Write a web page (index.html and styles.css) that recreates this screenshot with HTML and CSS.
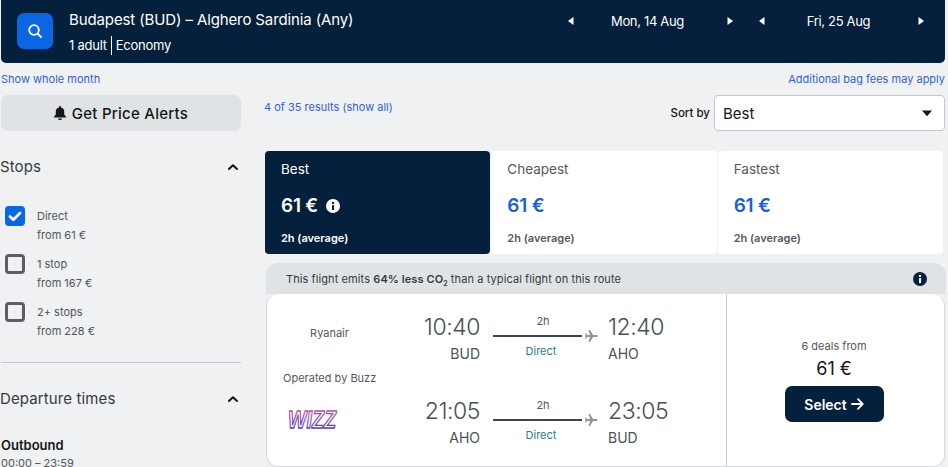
FILE: index.html
```html
<!DOCTYPE html>
<html lang="en">
<head>
<meta charset="utf-8">
<title>Flights</title>
<link rel="stylesheet" href="styles.css">
</head>
<body>
<div class="page">
  <header class="topbar">
    <div class="search-btn">
      <svg width="16" height="16" viewBox="0 0 16 16"><circle cx="7" cy="7" r="4.800" fill="none" stroke="#fff" stroke-width="1.800"/><path d="M10.600 10.600 14 14" stroke="#fff" stroke-width="2" stroke-linecap="round"/></svg>
    </div>
    <div class="route">
      <div class="route-title">Budapest (BUD) – Alghero Sardinia (Any)</div>
      <div class="route-sub"><span class="sub-a">1 adult</span><span>Economy</span></div>
    </div>
    <div class="dates">
      <div class="date-picker">
        <svg class="tri" viewBox="0 0 6 8"><path d="M5.500 0v8L0 4z"/></svg>
        <span class="date-text">Mon, 14 Aug</span>
        <svg class="tri" viewBox="0 0 6 8"><path d="M.5 0v8L6 4z"/></svg>
      </div>
      <div class="date-picker">
        <svg class="tri" viewBox="0 0 6 8"><path d="M5.500 0v8L0 4z"/></svg>
        <span class="date-text">Fri, 25 Aug</span>
        <svg class="tri" viewBox="0 0 6 8"><path d="M.5 0v8L6 4z"/></svg>
      </div>
    </div>
  </header>

  <div class="notes">
    <a class="link">Show whole month</a>
    <a class="link">Additional bag fees may apply</a>
  </div>

  <div class="columns">
    <aside class="sidebar">
      <div class="alerts">
        <svg width="12" height="14" viewBox="0 0 12 14"><path d="M6 0a1 1 0 0 1 1 1v.6A4.200 4.200 0 0 1 10.200 5.700V8.600L12 10.800V11.600H0V10.800L1.800 8.600V5.700A4.200 4.200 0 0 1 5 1.600V1a1 1 0 0 1 1-1zM4 12.400h4a2 1.600 0 0 1-4 0z" fill="#161616"/></svg>
        Get Price Alerts
      </div>

      <div class="filter-head stops-head">
        <span>Stops</span>
        <svg class="chev" viewBox="0 0 10 6"><path d="M1 5 5 1.200 9 5" fill="none" stroke="#161616" stroke-width="2" stroke-linecap="round" stroke-linejoin="round"/></svg>
      </div>
      <div class="options">
        <div class="option">
          <span class="box on"><svg width="14" height="11" viewBox="0 0 14 11"><path d="M2 5.500 5.300 8.700 12 2" fill="none" stroke="#fff" stroke-width="2.800" stroke-linecap="round" stroke-linejoin="round"/></svg></span>
          <div class="opt-text"><div>Direct</div><div>from 61 €</div></div>
        </div>
        <div class="option">
          <span class="box"></span>
          <div class="opt-text"><div>1 stop</div><div>from 167 €</div></div>
        </div>
        <div class="option">
          <span class="box"></span>
          <div class="opt-text"><div>2+ stops</div><div>from 228 €</div></div>
        </div>
      </div>
      <hr class="rule">
      <div class="filter-head">
        <span>Departure times</span>
        <svg class="chev" viewBox="0 0 10 6"><path d="M1 5 5 1.200 9 5" fill="none" stroke="#161616" stroke-width="2" stroke-linecap="round" stroke-linejoin="round"/></svg>
      </div>
      <div class="outbound">Outbound</div>
      <div class="range">00:00 – 23:59</div>
    </aside>

    <main class="results">
      <div class="toolbar">
        <a class="link count">4 of 35 results (show all)</a>
        <div class="sort">
          <span class="sort-label">Sort by</span>
          <div class="select"><span>Best</span><svg width="10" height="6" viewBox="0 0 10 6"><path d="M0 .5h10L5.500 5.800a.7.7 0 0 1-1 0z" fill="#161616"/></svg></div>
        </div>
      </div>

      <div class="tabs">
        <div class="tab active">
          <div class="tab-name">Best</div>
          <div class="tab-price">61 € <svg class="info" width="14" height="14" viewBox="0 0 14 14"><circle cx="7" cy="7" r="7" fill="#fff"/><rect x="6" y="6" width="2.100" height="5" rx=".4" fill="#05203c"/><circle cx="7" cy="3.900" r="1.200" fill="#05203c"/></svg></div>
          <div class="tab-time">2h (average)</div>
        </div>
        <div class="tab">
          <div class="tab-name">Cheapest</div>
          <div class="tab-price">61 €</div>
          <div class="tab-time">2h (average)</div>
        </div>
        <div class="tab">
          <div class="tab-name">Fastest</div>
          <div class="tab-price">61 €</div>
          <div class="tab-time">2h (average)</div>
        </div>
      </div>

      <article class="result">
        <div class="eco">
          <span>This flight emits <b>64% less CO<sub>2</sub></b> than a typical flight on this route</span>
          <svg width="14" height="14" viewBox="0 0 14 14"><circle cx="7" cy="7" r="7" fill="#05203c"/><rect x="6" y="6" width="2.100" height="5" rx=".4" fill="#fff"/><circle cx="7" cy="3.900" r="1.200" fill="#fff"/></svg>
        </div>
        <div class="ticket">
          <div class="legs">
            <div class="leg">
              <div class="carrier"><span class="carrier-name">Ryanair</span></div>
              <div class="time-col dep"><div class="time">10:40</div><div class="code">BUD</div></div>
              <div class="path">
                <div class="dur">2h</div>
                <div class="line-row"><span class="line"></span><svg class="plane" viewBox="0 0 14 14"><path d="M13.500 7c0-.6-.7-1-1.300-1H9L6 1H4.600l1.500 5H3.200L2 4.500H1L1.700 7 1 9.500h1L3.200 8h2.900l-1.500 5H6l3-5h3.200c.6 0 1.300-.4 1.300-1z"/></svg></div>
                <div class="stops">Direct</div>
              </div>
              <div class="time-col"><div class="time">12:40</div><div class="code">AHO</div></div>
            </div>
            <div class="operated">Operated by Buzz</div>
            <div class="leg">
              <div class="carrier">
                <svg class="wizz" width="54" height="28" viewBox="0 0 54 28">
                  <defs><linearGradient id="wizz-grad" x1="0" y1="0" x2="0" y2="1"><stop offset="0" stop-color="#d24ea6"/><stop offset="1" stop-color="#3d3fb4"/></linearGradient></defs>
                  <text class="wizz-text" x="3" y="21" textLength="48" lengthAdjust="spacingAndGlyphs" stroke="url(#wizz-grad)">WIZZ</text>
                </svg>
              </div>
              <div class="time-col dep"><div class="time">21:05</div><div class="code">AHO</div></div>
              <div class="path">
                <div class="dur">2h</div>
                <div class="line-row"><span class="line"></span><svg class="plane" viewBox="0 0 14 14"><path d="M13.500 7c0-.6-.7-1-1.300-1H9L6 1H4.600l1.500 5H3.200L2 4.500H1L1.700 7 1 9.500h1L3.200 8h2.900l-1.500 5H6l3-5h3.200c.6 0 1.300-.4 1.300-1z"/></svg></div>
                <div class="stops">Direct</div>
              </div>
              <div class="time-col"><div class="time">23:05</div><div class="code">BUD</div></div>
            </div>
          </div>
          <div class="deal">
            <div class="deal-count">6 deals from</div>
            <div class="deal-price">61 €</div>
            <div class="select-btn">Select <svg width="13" height="12" viewBox="0 0 13 12"><path d="M1 6h10.500M7 1.200 11.700 6 7 10.800" fill="none" stroke="#fff" stroke-width="1.800" stroke-linecap="round" stroke-linejoin="round"/></svg></div>
          </div>
        </div>
      </article>
    </main>
  </div>
</div>
</body>
</html>
```

FILE: styles.css
```css
* { box-sizing: border-box; }
html, body { margin: 0; height: 467px; overflow: hidden; }
body { background: #eff1f3; font-family: Inter, "Noto Sans", sans-serif; color: #161616; }
.page { width: 948px; height: 467px; overflow: hidden; padding: 0 3px 0 1px; }

.topbar { height: 63px; background: #05203c; color: #fff; border-radius: 0 0 5px 5px; display: flex; align-items: flex-start; padding: 13px 0 0 16px; }
.search-btn { width: 36px; height: 36px; border-radius: 7px; background: #0c66e4; display: flex; align-items: center; justify-content: center; flex: none; }
.route { margin-left: 16px; margin-top: -3px; width: 490px; flex: none; }
.route-title { font-size: 15px; line-height: 20px; font-weight: 400; letter-spacing: -.12px; }
.route-sub { display: flex; margin-top: 6px; font-size: 13px; line-height: 19px; letter-spacing: -.25px; }
.sub-a { padding-right: 4px; margin-right: 4px; border-right: 1px solid #fff; }
.dates { display: flex; margin-left: 9px; gap: 26px; margin-top: -1px; }
.date-picker { width: 165px; height: 18px; display: flex; align-items: center; justify-content: space-between; font-size: 13px; letter-spacing: -.32px; }
.date-text { margin-right: 6px; }
.tri { width: 6px; height: 8px; fill: #fff; }

.notes { display: flex; justify-content: space-between; height: 32px; padding-top: 9px; }
.link { color: #3a5fc8; font-size: 11px; line-height: 14px; }

.columns { display: flex; gap: 24px; }
.sidebar { width: 240px; flex: none; }
.alerts { height: 36px; border-radius: 7px; background: #e0e3e5; display: flex; align-items: center; justify-content: center; gap: 6px; font-size: 15px; font-weight: 500; letter-spacing: .25px; }
.filter-head { display: flex; justify-content: space-between; align-items: center; font-size: 15px; line-height: 20px; color: #333b42; padding-right: 3px; letter-spacing: .12px; }
.filter-head span { margin-left: -1px; }
.stops-head { margin-top: 26px; }
.chev { width: 10px; height: 6px; }
.options { margin-top: 28px; display: flex; flex-direction: column; gap: 10px; }
.option { display: flex; padding-left: 4px; gap: 12px; height: 38px; }
.box { width: 20px; height: 20px; border: 3px solid #5a5e66; border-radius: 4px; display: flex; align-items: center; justify-content: center; flex: none; margin-top: 1px; }
.box.on { background: #0c66e4; border-color: #0c66e4; }
.opt-text { font-size: 11px; line-height: 19px; color: #50565c; margin-top: 2px; }
.rule { border: 0; border-top: 1px solid #c2c9cd; margin: 23px 0 26px; }
.outbound { margin-top: 27px; font-size: 13px; line-height: 18px; font-weight: 600; }
.range { font-size: 11px; line-height: 18px; color: #50565c; }

.results { flex: 1; min-width: 0; }
.toolbar { display: flex; justify-content: space-between; height: 56px; }
.count { margin-top: 5px; margin-left: -1px; }
.sort { display: flex; align-items: flex-start; gap: 4px; }
.sort-label { font-size: 11.500px; line-height: 36px; font-weight: 500; }
.select { width: 231px; height: 36px; background: #fff; border: 1px solid #c2c9cd; border-radius: 4px; display: flex; align-items: center; justify-content: space-between; padding: 0 12px 0 8px; font-size: 15px; }

.tabs { display: flex; gap: 1px; height: 103px; padding-right: 2px; }
.tab { flex: 1; background: #fff; border-radius: 4px; padding: 9px 16px 0; color: #545860; }
.tab.active { background: #05203c; color: #fff; }
.tab-name { font-size: 13.500px; line-height: 18px; }
.tab-price { font-size: 19px; line-height: 24px; font-weight: 600; color: #1c5fd0; margin-top: 16px; display: flex; align-items: center; gap: 3px; letter-spacing: -.2px; }
.tab.active .tab-price { color: #fff; }
.info { margin-left: 5px; }
.tab-time { font-size: 11px; line-height: 14px; font-weight: 600; margin-top: 13px; }

.result { margin: 9px 0 0 1px; }
.eco { height: 31px; padding: 0 19px 0 20px; background: #e0e3e5; border-radius: 12px 12px 0 0; display: flex; align-items: center; justify-content: space-between; font-size: 11px; letter-spacing: .09px; color: #333b42; margin-right: -1px; }
.eco sub { font-size: 7px; line-height: 0; }
.eco b { font-weight: 600; }
.ticket { display: flex; height: 173px; background: #fff; border-radius: 12px; border: 1px solid #d5d9dc; border-width: 0 1px 1px 1px; margin-top: 0; }
.legs { width: 460px; border-right: 1px solid #c2c9cd; padding-top: 14px; flex: none; }
.leg { display: flex; height: 62px; padding-top: 4px; }
.operated { font-size: 11px; line-height: 14px; color: #545860; padding-left: 16px; margin: 1px 0 7px; height: 14px; }
.carrier { width: 98px; display: flex; align-items: center; justify-content: center; flex: none; padding-bottom: 17px; }
.carrier-name { font-size: 11px; color: #545860; margin-left: 27px; }
.wizz { margin-top: 8px; margin-left: -8px; overflow: visible; }
.wizz-text { font-family: "Liberation Sans", sans-serif; font-style: italic; font-weight: 700; font-size: 24px; fill: #fff; stroke-width: 1.300px; }
.time-col { width: 90px; flex: none; color: #4b5158; }
.time-col.dep { width: 115px; text-align: right; }
.time { font-size: 23px; line-height: 30px; font-weight: 300; letter-spacing: -.45px; }
.code { font-size: 14px; line-height: 20px; margin-top: 2px; }
.path { width: 120px; margin-left: 13px; margin-right: -5px; flex: none; text-align: center; color: #545860; }
.dur { font-size: 11px; line-height: 14px; margin-top: 2px; padding-right: 20px; }
.line-row { display: flex; align-items: center; height: 14px; margin-top: 1px; gap: 2px; }
.line { width: 89px; height: 2px; background: #3f454b; }
.plane { width: 14px; height: 14px; fill: #8f949b; }
.stops { font-size: 11px; line-height: 14px; color: #2f7d82; padding-right: 24px; margin-top: 1px; }
.deal { flex: 1; display: flex; flex-direction: column; align-items: center; padding-top: 45px; padding-right: 3px; }
.deal-count { font-size: 11px; line-height: 14px; color: #545860; }
.deal-price { font-size: 18px; line-height: 22px; margin-top: 5px; }
.select-btn { margin-top: 6px; width: 99px; height: 36px; background: #05203c; color: #fff; border-radius: 7px; display: flex; align-items: center; justify-content: center; gap: 4px; font-size: 14px; font-weight: 600; }
```
